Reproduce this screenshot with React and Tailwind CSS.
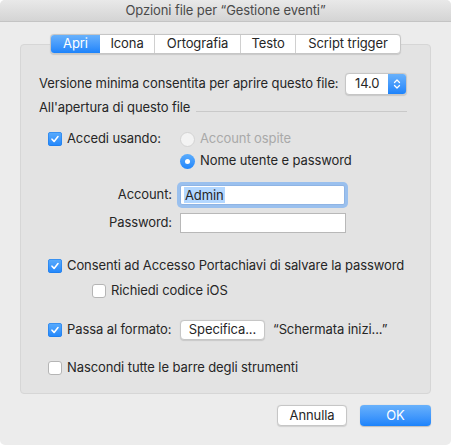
import React from "react";

const font = { fontFamily: 'Inter, "Liberation Sans", Arial, sans-serif' };

function Check({ on }) {
  return on ? (
    <span className="flex h-[14px] w-[14px] shrink-0 items-center justify-center rounded-[3px] bg-gradient-to-b from-[#5aacfc] to-[#1f86fb] shadow-[inset_0_0_0_0.5px_#1a78e6]">
      <svg width="10" height="10" viewBox="0 0 10 10">
        <path d="M2 5.2 L4.1 7.4 L8 2.6" fill="none" stroke="white" strokeWidth="1.6" strokeLinecap="round" strokeLinejoin="round" />
      </svg>
    </span>
  ) : (
    <span className="h-[14px] w-[14px] shrink-0 rounded-[3px] border border-[#b5b5b5] bg-white" />
  );
}

function Radio({ on, disabled }) {
  if (on)
    return (
      <span className="flex h-[15px] w-[15px] shrink-0 items-center justify-center rounded-full bg-gradient-to-b from-[#5aacfc] to-[#1f86fb]">
        <span className="h-[5px] w-[5px] rounded-full bg-white" />
      </span>
    );
  return <span className={`h-[15px] w-[15px] shrink-0 rounded-full border ${disabled ? "border-[#d3d3d3] bg-[#f3f3f3]" : "border-[#b5b5b5] bg-white"}`} />;
}

const tabs = [
  ["Apri", "w-[49px]"],
  ["Icona", "w-[54px]"],
  ["Ortografia", "w-[86px]"],
  ["Testo", "w-[55px]"],
  ["Script trigger", "w-[105px]"],
];

export default function App() {
  return (
    <div className="h-[445px] w-[451px] whitespace-nowrap bg-white text-[13px] tracking-[-0.1px] text-[#262626]" style={font}>
      <div className="flex h-full flex-col overflow-hidden rounded-[5px] bg-[#ececec]">
        <div className="flex h-[22px] shrink-0 items-center justify-center border-b border-[#c4c4c4] bg-gradient-to-b from-[#e9e9e9] to-[#d4d4d4] text-[13px] text-[#4a4a4a]">
          Opzioni file per “Gestione eventi”
        </div>

        <div className="flex flex-col px-[20px] pt-[12px]">
          <div className="relative z-10 flex justify-center">
            <div className="flex h-[20px] overflow-hidden rounded-[4px] border border-[#c6c6c6] bg-white shadow-[0_0.5px_1px_rgba(0,0,0,0.12)]">
              {tabs.map(([t, w], i) => (
                <div
                  key={t}
                  className={`flex items-center justify-center ${w} ${i === 0 ? "bg-gradient-to-b from-[#68b1fb] to-[#1b83fb] text-white" : "text-[#262626]"} ${i > 1 ? "border-l border-[#d0d0d0]" : ""}`}
                >
                  {t}
                </div>
              ))}
            </div>
          </div>

          <div className="-mt-[10px] flex flex-col rounded-[4px] border border-[#d6d6d6] bg-[#e3e3e3] pb-[17px] pl-[18px] pr-[23px] pt-[27px]">
            <div className="flex h-[23px] items-center">
              <span>Versione minima consentita per aprire questo file:</span>
              <div className="ml-auto flex h-[22px] w-[62px] overflow-hidden rounded-[4px] border border-[#c6c6c6] bg-white shadow-[0_0.5px_1px_rgba(0,0,0,0.12)]">
                <span className="flex flex-1 items-center pl-[9px]">14.0</span>
                <span className="flex w-[18px] items-center justify-center bg-gradient-to-b from-[#68b1fb] to-[#1b83fb]">
                  <svg width="8" height="12" viewBox="0 0 8 12">
                    <path d="M1.5 4.5 L4 2 L6.5 4.5 M1.5 7.5 L4 10 L6.5 7.5" fill="none" stroke="white" strokeWidth="1.3" strokeLinecap="round" strokeLinejoin="round" />
                  </svg>
                </span>
              </div>
            </div>

            <div className="mt-[4px] flex h-[16px] items-end">
              <span className="leading-[16px]">All'apertura di questo file</span>
              <span className="mb-[3px] ml-[6px] h-px flex-1 bg-[#c9c9c9]" />
            </div>

            <div className="mt-[16px] flex h-[16px] items-center pl-[9px]">
              <Check on />
              <span className="ml-[5px] w-[113px]">Accedi usando:</span>
              <Radio disabled />
              <span className="ml-[5px] text-[#a9a9a9]">Account ospite</span>
            </div>
            <div className="mt-[6px] flex h-[16px] items-center pl-[141px]">
              <Radio on />
              <span className="ml-[5px]">Nome utente e password</span>
            </div>

            <div className="mt-[16px] flex h-[20px] items-center">
              <span className="w-[133px] text-right">Account:</span>
              <span className="ml-[8px] flex h-[20px] w-[165px] items-center rounded-[2px] border border-[#8fb4e4] bg-white pl-[3px] shadow-[0_0_0_3px_#9ac0ee]">
                <span className="bg-[#b3d7ff] px-[1px] leading-[16px]">Admin</span>
              </span>
            </div>
            <div className="mt-[8px] flex h-[20px] items-center">
              <span className="w-[133px] text-right">Password:</span>
              <span className="ml-[8px] h-[20px] w-[166px] border border-[#b8b8b8] bg-white" />
            </div>

            <div className="mt-[25px] flex h-[16px] items-center pl-[9px]">
              <Check on />
              <span className="ml-[5px]">Consenti ad Accesso Portachiavi di salvare la password</span>
            </div>
            <div className="mt-[9px] flex h-[16px] items-center pl-[53px]">
              <Check />
              <span className="ml-[5px]">Richiedi codice iOS</span>
            </div>

            <div className="mt-[21px] flex h-[20px] items-center pl-[9px]">
              <Check on />
              <span className="ml-[5px] w-[113px]">Passa al formato:</span>
              <span className="flex h-[20px] w-[85px] items-center justify-center rounded-[4px] border border-[#c6c6c6] bg-white shadow-[0_0.5px_1px_rgba(0,0,0,0.12)]">
                Specifica...
              </span>
              <span className="ml-[8px]">“Schermata inizi...”</span>
            </div>

            <div className="mt-[20px] flex h-[16px] items-center pl-[9px]">
              <Check />
              <span className="ml-[5px]">Nascondi tutte le barre degli strumenti</span>
            </div>
          </div>

          <div className="mt-[11px] flex justify-end">
            <span className="flex h-[21px] w-[70px] items-center justify-center rounded-[4px] border border-[#c6c6c6] bg-white shadow-[0_0.5px_1px_rgba(0,0,0,0.12)]">
              Annulla
            </span>
            <span className="ml-[13px] flex h-[21px] w-[71px] items-center justify-center rounded-[4px] bg-gradient-to-b from-[#68b1fb] to-[#1b83fb] text-white shadow-[0_0.5px_1px_rgba(0,0,0,0.2)]">
              OK
            </span>
          </div>
        </div>
      </div>
    </div>
  );
}
